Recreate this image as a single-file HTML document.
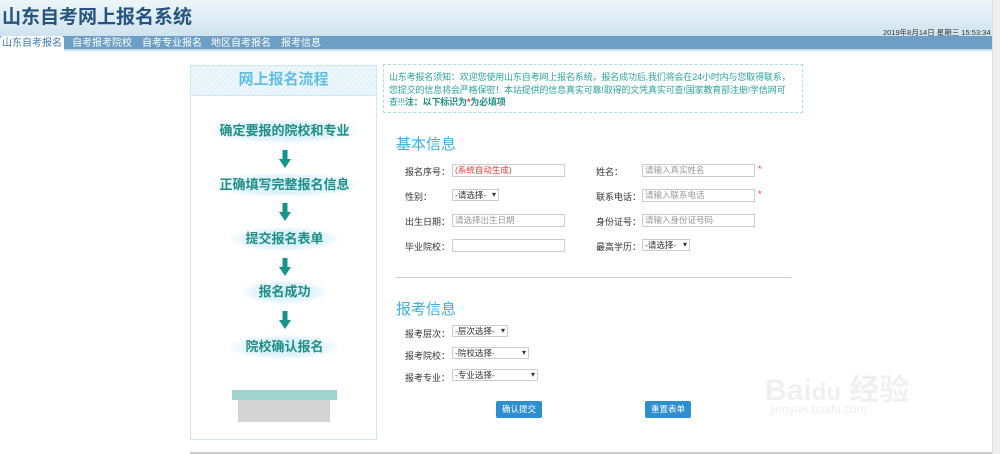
<!DOCTYPE html>
<html><head><meta charset="utf-8"><style>
*{margin:0;padding:0;box-sizing:border-box}
body{width:1000px;height:454px;overflow:hidden;background:#fff;font-family:"Liberation Sans","Noto Sans CJK SC",sans-serif;position:relative;font-size:9px;color:#333}
.abs{position:absolute}
#hd{left:0;top:0;width:992px;height:36px;background:linear-gradient(#eef5f9,#cfe3ef)}
#nav{left:0;top:36px;width:992px;height:15px;background:#6d9fc6;border-bottom:2px solid #c9dfeb}
#nav span{position:absolute;top:0;color:#fff;font-size:10px;line-height:15px}
#sb{left:992px;top:0;width:8px;height:454px;background:#f0f0f0;border-left:1px solid #ddd}
#left{left:190px;top:65px;width:187px;height:375px;border:1px solid #cde8f3}
.step{position:absolute;left:20px;width:147px;height:24px;text-align:center;font-weight:bold;color:#1f8f86;font-size:13px;line-height:24px;background:radial-gradient(ellipse at center,#cbe9f5 0%,#e6f5fb 55%,rgba(255,255,255,0) 75%)}
.arr{position:absolute;left:88px;width:12px;height:18px}
.lab{position:absolute;font-size:9px;color:#333}
.inp{position:absolute;height:13px;border:1px solid #ccc;font-size:8.5px;color:#999;padding-left:2px;line-height:11px}
.sel{position:absolute;height:12px;border:1px solid #ccc;font-size:8.5px;color:#333;padding-left:2px;line-height:10px}
.sel:after{content:"▾";position:absolute;right:2px;top:0;font-size:8px}
.star{position:absolute;color:#e33;font-size:9px}
.btn{position:absolute;width:46px;height:17px;background:#2e8fd0;color:#fff;border-radius:2px;font-size:8.5px;text-align:center;line-height:17px}
</style></head><body>
<div id="hd" class="abs"></div>
<div class="abs" style="left:2px;top:2px;font-size:19px;font-weight:bold;color:#25557e">山东自考网上报名系统</div>
<div class="abs" style="left:883px;top:27px;font-size:7.5px;color:#333">2019年8月14日 星期三 15:53:34</div>
<div id="nav" class="abs">
<span style="left:0;background:#fff;color:#3b7db5;padding:0 2px;border-radius:3px 3px 0 0">山东自考报名</span>
<span style="left:72px">自考报考院校</span><span style="left:142px">自考专业报名</span><span style="left:211px">地区自考报名</span><span style="left:281px">报考信息</span></div>
<div id="sb" class="abs"></div>
<div id="left" class="abs">
<div style="height:30px;background:repeating-linear-gradient(135deg,#e3f2fa 0 2px,#eef8fc 2px 4px);border-bottom:1px solid #cde8f3;text-align:center;font-size:15px;font-weight:bold;color:#5fc0e4;line-height:28px">网上报名流程</div>
<div class="step" style="top:53px">确定要报的院校和专业</div>
<svg class="arr" style="top:84px" viewBox="0 0 12 18"><rect x="3.5" y="0" width="5" height="10" fill="#14948a"/><path d="M0 9H12L6 18Z" fill="#14948a"/></svg>
<div class="step" style="top:107px">正确填写完整报名信息</div>
<svg class="arr" style="top:137px" viewBox="0 0 12 18"><rect x="3.5" y="0" width="5" height="10" fill="#14948a"/><path d="M0 9H12L6 18Z" fill="#14948a"/></svg>
<div class="step" style="top:161px;left:40px;width:107px">提交报名表单</div>
<svg class="arr" style="top:192px" viewBox="0 0 12 18"><rect x="3.5" y="0" width="5" height="10" fill="#14948a"/><path d="M0 9H12L6 18Z" fill="#14948a"/></svg>
<div class="step" style="top:214px;left:52px;width:83px">报名成功</div>
<svg class="arr" style="top:245px" viewBox="0 0 12 18"><rect x="3.5" y="0" width="5" height="10" fill="#14948a"/><path d="M0 9H12L6 18Z" fill="#14948a"/></svg>
<div class="step" style="top:269px;left:40px;width:107px">院校确认报名</div>
<div style="position:absolute;left:41px;top:324px;width:105px;height:10px;background:#9ed3ce"></div>
<div style="position:absolute;left:47px;top:334px;width:92px;height:22px;background:#d4d4d4"></div>
</div>
<div class="abs" style="left:383px;top:64px;width:420px;height:49px;border:1px dashed #a8dcef;padding:6px 5px;font-size:9px;letter-spacing:-0.15px;line-height:12.5px;color:#2aa59b">山东考报名须知：欢迎您使用山东自考网上报名系统，报名成功后,我们将会在24小时内与您取得联系，您提交的信息将会严格保密！本站提供的信息真实可靠!取得的文凭真实可查!国家教育部注册!学信网可查!!!<b style="color:#1f8f86">注：以下标识为<span style="color:#e33">*</span>为必填项</b></div>
<div class="abs" style="left:396px;top:133px;font-size:15px;color:#3cb0e0">基本信息</div>
<div class="lab" style="left:405px;top:165px">报名序号：</div><div class="inp" style="left:452px;top:164px;width:113px;color:#e33">(系统自动生成)</div>
<div class="lab" style="left:596px;top:165px">姓名：</div><div class="inp" style="left:642px;top:164px;width:113px">请输入真实姓名</div><div class="star" style="left:758px;top:164px">*</div>
<div class="lab" style="left:405px;top:190px">性别：</div><div class="sel" style="left:452px;top:189px;width:47px">-请选择-</div>
<div class="lab" style="left:596px;top:190px">联系电话：</div><div class="inp" style="left:642px;top:189px;width:113px">请输入联系电话</div><div class="star" style="left:758px;top:189px">*</div>
<div class="lab" style="left:405px;top:215px">出生日期：</div><div class="inp" style="left:452px;top:214px;width:113px">请选择出生日期</div>
<div class="lab" style="left:596px;top:215px">身份证号：</div><div class="inp" style="left:642px;top:214px;width:113px">请输入身份证号码</div>
<div class="lab" style="left:405px;top:240px">毕业院校：</div><div class="inp" style="left:452px;top:239px;width:113px"></div>
<div class="lab" style="left:596px;top:240px">最高学历：</div><div class="sel" style="left:642px;top:239px;width:48px">-请选择-</div>
<div class="abs" style="left:396px;top:277px;width:395px;height:1px;background:#ccc"></div>
<div class="abs" style="left:396px;top:298px;font-size:15px;color:#3cb0e0">报考信息</div>
<div class="lab" style="left:405px;top:327px">报考层次：</div><div class="sel" style="left:452px;top:325px;width:56px">-层次选择-</div>
<div class="lab" style="left:405px;top:349px">报考院校：</div><div class="sel" style="left:452px;top:347px;width:77px">-院校选择-</div>
<div class="lab" style="left:405px;top:371px">报考专业：</div><div class="sel" style="left:452px;top:369px;width:86px">-专业选择-</div>
<div class="btn" style="left:496px;top:401px">确认提交</div>
<div class="btn" style="left:645px;top:401px">重置表单</div>
<div class="abs" style="left:190px;top:452px;width:802px;height:2px;background:#ccc"></div>
<div class="abs" style="left:765px;top:365px;font-size:30px;color:#f0f0f0;font-weight:bold">Bai<span style="font-size:24px">du</span> 经验</div>
<div class="abs" style="left:770px;top:402px;font-size:12px;color:#eeeeee">jingyan.baidu.com</div>
</body></html>
